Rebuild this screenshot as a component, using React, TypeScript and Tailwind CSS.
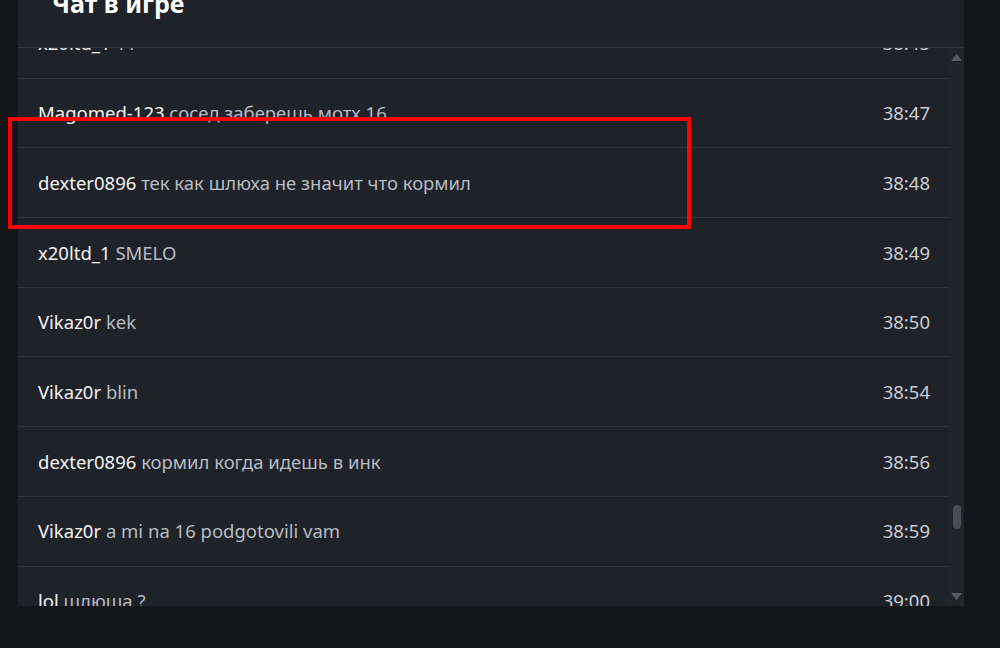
import React from "react";

const rows: { name: string; msg: string; time: string }[] = [
  { name: "x20ltd_1", msg: "11", time: "38:45" },
  { name: "Magomed-123", msg: "сосед заберешь мотх 16", time: "38:47" },
  { name: "dexter0896", msg: "тек как шлюха не значит что кормил", time: "38:48" },
  { name: "x20ltd_1", msg: "SMELO", time: "38:49" },
  { name: "Vikaz0r", msg: "kek", time: "38:50" },
  { name: "Vikaz0r", msg: "blin", time: "38:54" },
  { name: "dexter0896", msg: "кормил когда идешь в инк", time: "38:56" },
  { name: "Vikaz0r", msg: "a mi na 16 podgotovili vam", time: "38:59" },
  { name: "lol", msg: "шлюша ?", time: "39:00" },
];

export default function App() {
  return (
    <div className="relative w-[1000px] h-[648px] overflow-hidden bg-[#141519] font-['Noto_Sans',sans-serif]">
      <div className="ml-[18px] w-[946px] h-[606px] bg-[#202229] flex flex-col">
        <div className="h-[48px] shrink-0 border-b border-[#31343b] overflow-hidden pl-[34px] relative z-10 bg-[#202229]">
          <div className="text-[25px] leading-none font-bold text-white -mt-[9px]">Чат в игре</div>
        </div>
        <div className="flex flex-1 min-h-0">
          <div className="flex-1 overflow-hidden">
            <div className="-mt-[39px]">
              {rows.map((r, i) => (
                <div
                  key={i}
                  className="h-[69.7px] border-b border-[#30333a] flex items-center justify-between pl-[20px] pr-[19px] text-[18.5px]"
                >
                  <div className="whitespace-nowrap">
                    <span className="text-[#f2f2f2]">{r.name}</span>{" "}
                    <span className="text-[#b7bbc3]">{r.msg}</span>
                  </div>
                  <div className="text-[#c9cdd4]">{r.time}</div>
                </div>
              ))}
            </div>
          </div>
          <div className="w-[15px] bg-[#22242b] flex flex-col items-center justify-between py-[6px]">
            <svg width="11" height="7" viewBox="0 0 11 7">
              <polygon points="5.5,0 11,7 0,7" fill="#575a62" />
            </svg>
            <div className="flex-1 w-full relative">
              <div className="absolute left-[4px] top-[444px] w-[8px] h-[24px] rounded-full bg-[#4a4d55]" />
            </div>
            <svg width="11" height="7" viewBox="0 0 11 7">
              <polygon points="0,0 11,0 5.5,7" fill="#575a62" />
            </svg>
          </div>
        </div>
      </div>
      <div className="absolute left-[8px] top-[117px] w-[683px] h-[112px] border-4 border-[#ff0000]" />
    </div>
  );
}
